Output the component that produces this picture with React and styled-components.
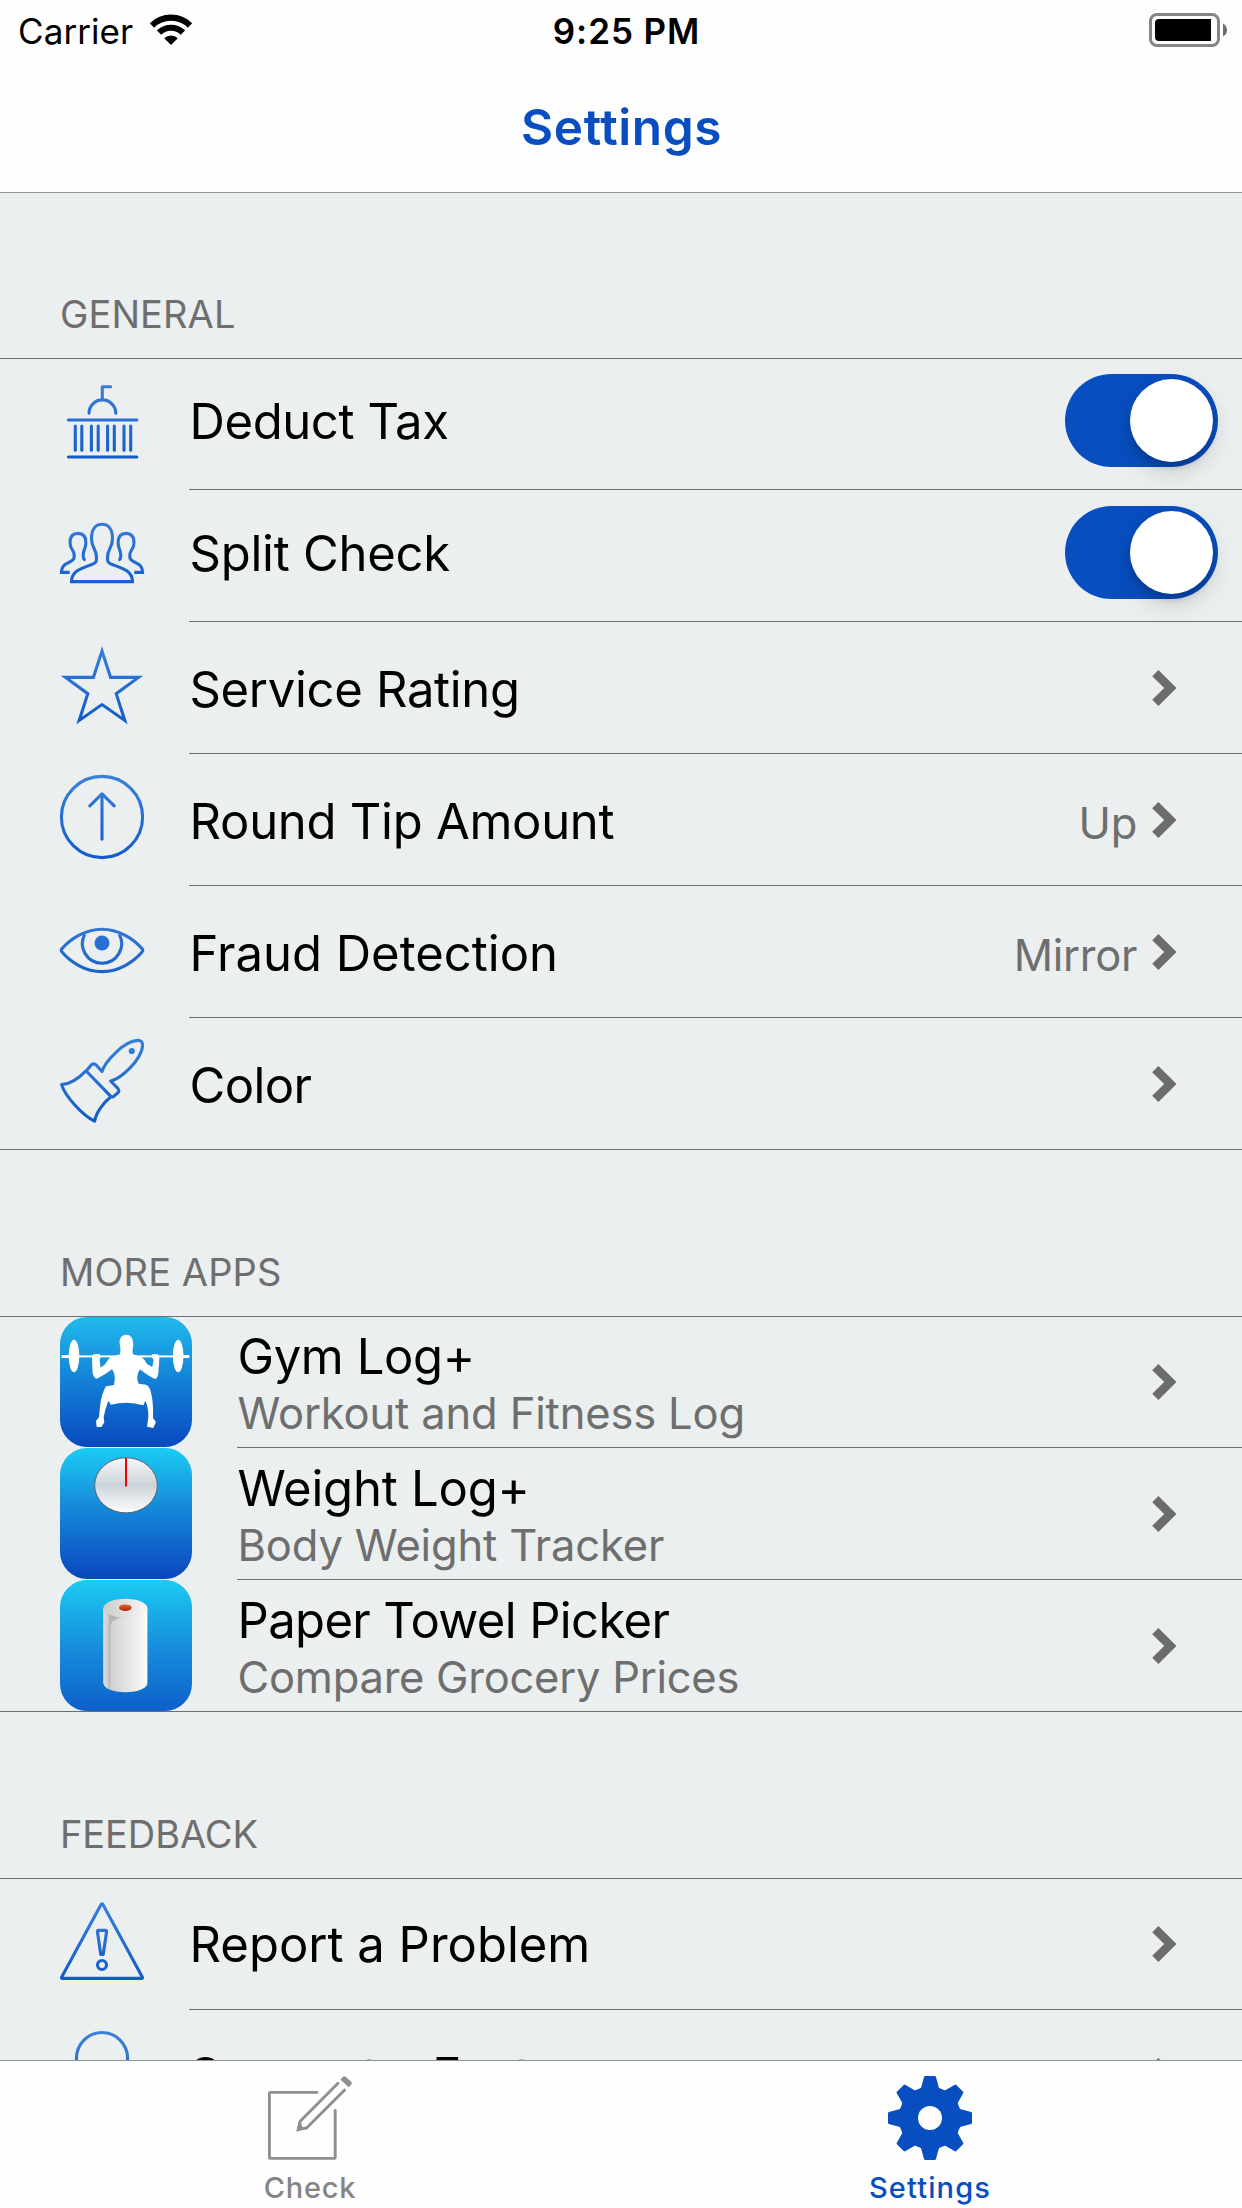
import React from "react";
import styled, { createGlobalStyle } from "styled-components";

const BLUE = "#084ec1";
const GRAY = "#6e6e6e";
const LINE = "#6c6f70";

const GlobalStyle = createGlobalStyle`
  *, *::before, *::after { box-sizing: border-box; }
  body { margin: 0; background: #ffffff; }
`;

const Screen = styled.div`
  display: flex;
  flex-direction: column;
  width: 1242px;
  height: 2208px;
  overflow: hidden;
  background: #ebeff0;
  font-family: Inter, Roboto, "Liberation Sans", sans-serif;
  color: #000;
`;

/* ---------- navigation header ---------- */

const Nav = styled.header`
  flex: none;
  height: 193px;
  background: #fefefe;
  border-bottom: 1px solid #929697;
`;

const StatusBar = styled.div`
  display: grid;
  grid-template-columns: 1fr auto 1fr;
  height: 60px;
  padding: 0 15px 0 18px;
  font-size: 35px;
  line-height: 62px;
`;

const Carrier = styled.div`
  display: flex;
  gap: 16px;
  letter-spacing: 0.08px;
`;

const WifiIcon = styled.svg`
  width: 44px;
  height: 32px;
  margin-top: 14px;
`;

const Clock = styled.div`
  padding-left: 8px;
  font-weight: 600;
  letter-spacing: 0.9px;
`;

const BatteryIcon = styled.svg`
  justify-self: end;
  width: 78px;
  height: 34px;
  margin-top: 13px;
`;

const Title = styled.h1`
  display: flex;
  align-items: center;
  justify-content: center;
  height: 132px;
  margin: 0;
  padding: 2px 0 0 1px;
  font-size: 49.5px;
  font-weight: 600;
  letter-spacing: 0.6px;
  color: ${BLUE};
`;

/* ---------- table ---------- */

const Content = styled.main`
  flex: 1;
  min-height: 0;
  overflow: hidden;
`;

const SectionHeader = styled.h2`
  display: flex;
  align-items: flex-end;
  height: ${(p) => (p.$first ? 166 : 167)}px;
  margin: 0;
  padding: 0 60px 21px;
  border-bottom: 1px solid ${LINE};
  font-size: 38px;
  font-weight: 400;
  line-height: 46px;
  letter-spacing: ${(p) => p.$track}px;
  color: ${GRAY};
`;

const Group = styled.div`
  margin-top: -1px;
`;

const Row = styled.div`
  display: flex;
  height: 132px;
  padding-left: 60px;

  &:last-child {
    border-bottom: 1px solid ${LINE};
  }
`;

const RowIcon = styled.svg`
  flex: none;
  width: 84px;
  height: 84px;
  margin: 21px 45px 0 0;
  overflow: visible;
  fill: none;
  stroke: url(#tint);
  stroke-width: 3.1;
`;

const AppIcon = styled.svg`
  flex: none;
  width: 132px;
  height: 131px;
  margin-right: 45px;
`;

const RowBody = styled.div`
  display: flex;
  flex: 1;
  height: 132px;
  padding-right: 65px;
  border-bottom: 1px solid ${LINE};

  ${Row}:last-child & {
    height: 131px;
    border-bottom: 0;
  }
`;

const Label = styled.div`
  flex: 1;
  padding: ${(p) => p.$top}px 0 0 0.5px;
  font-size: 49px;
  line-height: 59px;
  letter-spacing: ${(p) => p.$track}px;
  white-space: nowrap;
`;

const Value = styled.div`
  padding: 42px 15px 0 0;
  font-size: 43.5px;
  line-height: 54px;
  letter-spacing: -0.3px;
  color: ${GRAY};
`;

const AppText = styled.div`
  flex: 1;
  padding: 11px 0 0 0.5px;
  white-space: nowrap;
`;

const AppName = styled.div`
  font-size: 49px;
  line-height: 59px;
  letter-spacing: ${(p) => p.$track}px;
`;

const AppDetail = styled.div`
  font-size: 43.5px;
  line-height: 54px;
  letter-spacing: ${(p) => p.$track}px;
  color: ${GRAY};
`;

const ChevronIcon = styled.svg`
  flex: none;
  width: 25px;
  height: 36px;
  margin-top: 48px;
  fill: #6c6c6c;
`;

const Switch = styled.div`
  flex: none;
  display: flex;
  justify-content: flex-end;
  width: 153px;
  height: 93px;
  margin: 16px -41px 0 0;
  padding: 5px 5.5px 5px 5px;
  border-radius: 47px;
  background: ${BLUE};
`;

const Knob = styled.div`
  width: 83px;
  height: 83px;
  border-radius: 50%;
  background: #fff;
  box-shadow: 0 9px 24px rgba(0, 0, 0, 0.16), 0 6px 6px rgba(0, 0, 0, 0.13);
`;

/* ---------- tab bar ---------- */

const TabBar = styled.nav`
  flex: none;
  display: grid;
  grid-template-columns: 1fr 1fr;
  height: 148px;
  padding-right: 2px;
  background: #fefefe;
  border-top: 1px solid #8f9394;
`;

const Tab = styled.div`
  display: flex;
  flex-direction: column;
  align-items: center;
  gap: 7px;
  padding-top: 15px;
  font-size: 29px;
  font-weight: 500;
  line-height: 41px;
  letter-spacing: ${(p) => p.$track}px;
  color: ${(p) => (p.$active ? BLUE : "#858585")};
`;

const TabIcon = styled.svg`
  width: 84px;
  height: 84px;
  fill: none;
`;

/* ---------- drawings ---------- */

const Defs = styled.svg`
  position: absolute;
  width: 0;
  height: 0;
`;

const Gradients = () => (
  <Defs aria-hidden="true">
    <defs>
      <linearGradient id="tint" gradientUnits="userSpaceOnUse" x1="0" y1="0" x2="0" y2="84">
        <stop offset="0" stopColor="#3a80da" />
        <stop offset="1" stopColor="#115ac8" />
      </linearGradient>
      <linearGradient id="gymBg" x1="0" y1="0" x2="0" y2="1">
        <stop offset="0" stopColor="#20bbec" />
        <stop offset="0.5" stopColor="#147fd6" />
        <stop offset="1" stopColor="#0949be" />
      </linearGradient>
      <linearGradient id="weightBg" x1="0" y1="0" x2="0" y2="1">
        <stop offset="0" stopColor="#1bccf4" />
        <stop offset="0.45" stopColor="#1689d9" />
        <stop offset="1" stopColor="#0a46be" />
      </linearGradient>
      <linearGradient id="paperBg" x1="0" y1="0" x2="0" y2="1">
        <stop offset="0" stopColor="#1bcbf2" />
        <stop offset="0.5" stopColor="#178fdc" />
        <stop offset="1" stopColor="#0e5fca" />
      </linearGradient>
      <linearGradient id="dial" x1="0" y1="0" x2="0" y2="1">
        <stop offset="0" stopColor="#f6f7f8" />
        <stop offset="0.5" stopColor="#cbd3d9" />
        <stop offset="0.68" stopColor="#dfe4e8" />
        <stop offset="1" stopColor="#fbfbfc" />
      </linearGradient>
      <linearGradient id="roll" gradientUnits="userSpaceOnUse" x1="50" y1="0" x2="87" y2="0">
        <stop offset="0" stopColor="#cfcfcf" />
        <stop offset="0.3" stopColor="#dedede" />
        <stop offset="0.6" stopColor="#eaeaea" />
        <stop offset="1" stopColor="#fbfbfb" />
      </linearGradient>
      <linearGradient id="flap" gradientUnits="userSpaceOnUse" x1="43.4" y1="0" x2="50.2" y2="0">
        <stop offset="0" stopColor="#dedede" />
        <stop offset="0.6" stopColor="#cfcfcf" />
        <stop offset="1" stopColor="#b3b3b3" />
      </linearGradient>
      <linearGradient id="rollTop" x1="0" y1="0" x2="1" y2="0">
        <stop offset="0" stopColor="#cccccc" />
        <stop offset="1" stopColor="#f6f6f6" />
      </linearGradient>
      <linearGradient id="core" x1="0" y1="0" x2="0" y2="1">
        <stop offset="0" stopColor="#e9661f" />
        <stop offset="1" stopColor="#b31f10" />
      </linearGradient>
    </defs>
  </Defs>
);

const Wifi = () => (
  <WifiIcon viewBox="0 0 44 32">
    <g fill="none" stroke="#000" strokeWidth="6.2">
      <path d="M3 11.4A27.3 27.3 0 0 1 41 11.4" />
      <path d="M10 18.6A17.3 17.3 0 0 1 34 18.6" />
    </g>
    <path d="M22 31L15.2 24.2A9.6 9.6 0 0 1 28.8 24.2Z" />
  </WifiIcon>
);

const Battery = () => (
  <BatteryIcon viewBox="0 0 78 34">
    <rect x="1.5" y="1.5" width="68" height="31" rx="6.5" fill="none" stroke="#858585" strokeWidth="3" />
    <path d="M10 6H62V28H10A4 4 0 0 1 6 24V10A4 4 0 0 1 10 6Z" />
    <path d="M74 10.5Q78 12.5 78 17T74 23.5Z" fill="#6f6f6f" />
  </BatteryIcon>
);

const Chevron = () => (
  <ChevronIcon viewBox="0 0 25 36">
    <path d="M0.2 6.3L6.4 0L24.5 18L6.4 36L0.2 29.7L12.2 18Z" />
  </ChevronIcon>
);

const Capitol = () => (
  <RowIcon viewBox="0 0 84 84" strokeLinecap="round" strokeLinejoin="round">
    <path d="M50.6 7.8H42.3V20.6M29 34.3A13.4 13.4 0 0 1 55.8 34.3" />
    <path d="M8.4 41.01L76.8 41M8.4 78.01L76.8 78" />
    <path d="M15.3 47V71.2M21.8 47V71.2M31.4 47V71.2M38.2 47V71.2M47.6 47V71.2M54.3 47V71.2M64 47V71.2M70.7 47V71.2" />
  </RowIcon>
);

const People = () => (
  <RowIcon viewBox="0 0 84 84">
    <path d="M42 13.3C35.2 13.3 31.5 18.6 31.5 27.5C31.5 38 36.5 37 36.5 46.5C36.5 50.5 36.3 51.5 33.3 52.8C25 56.5 11.5 58.5 11.5 70.6H72.5C72.5 58.5 59 56.5 50.7 52.8C47.7 51.5 47.5 50.5 47.5 46.5C47.5 37 52.5 38 52.5 27.5C52.5 18.6 48.8 13.3 42 13.3Z" />
    <path d="M25.6 49C22.4 48.4 23.2 42.5 23.7 40.8C24.6 37.5 25.9 36 25.9 31.5C25.9 25.5 22.8 22.4 17.9 22.4C13 22.4 10 25.5 10 31.5C10 39 14.2 38.5 14.2 44C14.2 47.5 14 48.3 11 50.2C7 52.7 1.4 53.5 1.4 61.4H9.7" />
    <path d="M58.4 49C61.6 48.4 60.8 42.5 60.3 40.8C59.4 37.5 58.1 36 58.1 31.5C58.1 25.5 61.2 22.4 66.1 22.4C71 22.4 74 25.5 74 31.5C74 39 69.8 38.5 69.8 44C69.8 47.5 70 48.3 73 50.2C77 52.7 82.6 53.5 82.6 61.4H74.3" />
  </RowIcon>
);

const Star = () => (
  <RowIcon viewBox="0 0 84 84" strokeMiterlimit="10">
    <path d="M42 8L50.6 34.4H78.5L56.2 50.7L64.8 77.4L42 61.6L19.2 77.4L27.8 50.7L5.5 34.4H33.4Z" />
  </RowIcon>
);

const ArrowUp = () => (
  <RowIcon viewBox="0 0 84 84" strokeLinecap="round" strokeLinejoin="round">
    <circle cx="42" cy="42" r="40.6" />
    <path d="M29.8 30.8L42 18.8L54.2 30.8M42 19V64.2L42.01 64" />
  </RowIcon>
);

const Eye = () => (
  <RowIcon viewBox="0 0 84 84">
    <path d="M2 45C1 43.9 1 42.7 2 41.6C11 31.5 25.5 22.3 42 22.3S73 31.5 82 41.6C83 42.7 83 43.9 82 45C73.5 55 59 64.6 42 64.6S10.5 55 2 45Z" />
    <path d="M24.8 27.2A19.6 19.6 0 1 0 59.2 27.2" />
    <circle cx="42" cy="36" r="7.5" fill="url(#tint)" stroke="none" />
  </RowIcon>
);

const Brush = () => (
  <RowIcon viewBox="0 0 84 84" strokeLinejoin="round">
    <path d="M42 32.6C43.5 26 50 19 56.5 12.8C63 6.6 71 2 77.5 1.4C81 1.2 82.8 3.2 82.6 6.8C82 13.5 76.5 22.5 70.8 28.2C65 34.2 58 40.8 50.6 42L57.4 48.8C59.4 50.8 59.2 52.6 57.6 54L54 57.2Q52.4 58.4 50.8 57.4L26.2 32L31 26.3C32.6 24.4 34.6 24.4 36.2 26Z" />
    <path d="M26.2 31.6C19.5 38.5 10.5 45.3 1.6 45.6C5 57 22.5 76.5 34.6 82.2C36 73.5 43.5 63.5 51.4 57.2" />
    <circle cx="71.8" cy="12" r="3.1" fill="url(#tint)" stroke="none" />
  </RowIcon>
);

const Warning = () => (
  <RowIcon viewBox="0 0 84 84" strokeLinejoin="round">
    <path d="M41.2 5.2Q42 4.2 42.8 5.2L82.4 78.2Q82.8 79.4 81.6 79.4H2.4Q1.2 79.4 1.6 78.2Z" />
    <path d="M37.4 32.4Q37.4 31.4 38.4 31.4H45.6Q46.6 31.4 46.6 32.4L43.2 55.4H40.8Z" />
    <circle cx="42" cy="66" r="4.5" />
  </RowIcon>
);

const Bulb = () => (
  <RowIcon viewBox="0 0 84 84" strokeLinejoin="round">
    <path d="M32 66C32 52 16.4 46 16.4 27.5A25.6 26 0 0 1 67.6 27.5C67.6 46 52 52 52 66Z" />
  </RowIcon>
);

const GymApp = () => (
  <AppIcon viewBox="0 0 132 131">
    <rect y="1" width="132" height="130" rx="27" fill="url(#gymBg)" />
    <g fill="#fff">
      <rect x="1.6" y="39" width="17" height="3" />
      <rect x="113" y="39" width="16.4" height="3" />
      <rect x="14" y="39.4" width="104" height="2" />
      <ellipse cx="14" cy="40" rx="5.3" ry="16.2" />
      <ellipse cx="118.2" cy="40" rx="5.3" ry="16.2" />
      <g transform="translate(-60 -86) scale(.33333)">
        <path d="M379 314C365 314 357 326 359 340C360 350 361 356 364 362L397 362C399 354 401 346 399 336C398 322 390 314 379 314Z" />
        <path d="M362 355L360 373L332 381Q322 390 315 403L302 413L299 390Q304 376 298 372L280 373L276 384L278 430Q282 446 291 446Q316 434 336 418Q346 432 344 450L342 465L318 469Q304 492 300 530L297 562L288 572L290 591H304L313 577L311 562Q316 534 325 512L333 524Q384 512 430 526L436 512Q446 532 445 562L441 590L460 594L468 576L459 564Q461 516 452 484Q448 468 438 464L416 461Q406 440 420 418Q444 438 465 447Q474 444 475 430L478 384L474 373L456 373Q453 380 461 390L457 411L441 402Q434 388 424 381L399 373L396 355Z" />
      </g>
    </g>
  </AppIcon>
);

const WeightApp = () => (
  <AppIcon viewBox="0 0 132 131">
    <rect width="132" height="131" rx="27" fill="url(#weightBg)" />
    <ellipse cx="66" cy="37.3" rx="31.4" ry="27.6" fill="url(#dial)" stroke="#59636b" strokeWidth="1" />
    <path d="M65 10H67V38.6H65Z" fill="#fb0007" />
  </AppIcon>
);

const PaperApp = () => (
  <AppIcon viewBox="0 0 132 131">
    <rect width="132" height="131" rx="27" fill="url(#paperBg)" />
    <path d="M43.4 28V103C43.4 108.4 53 112.2 65.4 112.2S87.4 108.4 87.4 103V28Z" fill="url(#roll)" />
    <path d="M43.4 28V103Q44.5 107.6 50.2 109.8V48Q50.2 39 62 37.6V34Z" fill="url(#flap)" />
    <ellipse cx="65.4" cy="28.2" rx="22" ry="9.4" fill="url(#rollTop)" />
    <ellipse cx="65.3" cy="27.7" rx="6.3" ry="3.3" fill="url(#core)" />
  </AppIcon>
);

const CheckIcon = () => (
  <TabIcon viewBox="0 0 84 84">
    <g stroke="#8f8f8f" strokeWidth="2.9" strokeLinejoin="round">
      <path d="M49 16.4H2.6Q1.4 16.4 1.4 17.6V81.2Q1.4 82.4 2.6 82.4H66Q67.2 82.4 67.2 81.2V34.4" strokeLinecap="round" />
      <path d="M70.7 6.6L32.2 45.2L30.2 53.6L38.6 52L77.4 13.2" strokeLinejoin="miter" />
    </g>
    <path d="M30.6 46.5L28.6 55.2L37.8 53.2L34 50.6L33.4 47.4Z" fill="#8f8f8f" />
    <path d="M72.4 3.6L75 .8Q76.4-.4 78 .9L83 5.6Q84.4 7 83.2 8.6L80.6 11.2Z" fill="#8f8f8f" />
  </TabIcon>
);

const GearIcon = () => (
  <TabIcon viewBox="-42 -42 84 84">
    <g fill={BLUE}>
      {[0, 45, 90, 135, 180, 225, 270, 315].map((angle) => (
        <path key={angle} transform={`rotate(${angle})`} d="M-9 -30L-5.9 -41.2Q-5.6 -42 -4.8 -42H4.8Q5.6 -42 5.9 -41.2L9 -30L12 -26L0 -8L-12 -26Z" />
      ))}
      <path
        fillRule="evenodd"
        d="M-8.6 -30.2L8.6 -30.2L15 -27.6L27.6 -15L30.2 -8.6V8.6L27.6 15L15 27.6L8.6 30.2H-8.6L-15 27.6L-27.6 15L-30.2 8.6V-8.6L-27.6 -15L-15 -27.6Z"
      />
    </g>
    <circle r="12" fill="#fefefe" />
  </TabIcon>
);

/* ---------- page ---------- */

const general = [
  { icon: Capitol, label: "Deduct Tax", track: -0.4, top: 34, on: true },
  { icon: People, label: "Split Check", track: -0.26, top: 34, on: true },
  { icon: Star, label: "Service Rating", track: -0.32, top: 38 },
  { icon: ArrowUp, label: "Round Tip Amount", track: -0.28, top: 38, value: "Up" },
  { icon: Eye, label: "Fraud Detection", track: 0, top: 38, value: "Mirror" },
  { icon: Brush, label: "Color", track: -0.6, top: 38 },
];

const apps = [
  { icon: GymApp, name: "Gym Log+", track: -0.4, detail: "Workout and Fitness Log", detailTrack: -0.15 },
  { icon: WeightApp, name: "Weight Log+", track: -0.22, detail: "Body Weight Tracker", detailTrack: -0.14 },
  { icon: PaperApp, name: "Paper Towel Picker", track: -0.64, detail: "Compare Grocery Prices", detailTrack: -0.26 },
];

const feedback = [
  { icon: Warning, label: "Report a Problem", track: 0, top: 37 },
  { icon: Bulb, label: "Suggest a Feature", track: -0.33, top: 36 },
];

const SettingRow = ({ icon: Icon, label, track, top, value, on }) => (
  <Row>
    <Icon />
    <RowBody>
      <Label $top={top} $track={track}>{label}</Label>
      {value && <Value>{value}</Value>}
      {on ? <Switch><Knob /></Switch> : <Chevron />}
    </RowBody>
  </Row>
);

const AppRow = ({ icon: Icon, name, track, detail, detailTrack }) => (
  <Row>
    <Icon />
    <RowBody>
      <AppText>
        <AppName $track={track}>{name}</AppName>
        <AppDetail $track={detailTrack}>{detail}</AppDetail>
      </AppText>
      <Chevron />
    </RowBody>
  </Row>
);

export default function App() {
  return (
    <>
      <GlobalStyle />
      <Gradients />
      <Screen>
        <Nav>
          <StatusBar>
            <Carrier>Carrier<Wifi /></Carrier>
            <Clock>9:25 PM</Clock>
            <Battery />
          </StatusBar>
          <Title>Settings</Title>
        </Nav>
        <Content>
          <SectionHeader $first $track={0.1}>GENERAL</SectionHeader>
          <Group>{general.map((item) => <SettingRow key={item.label} {...item} />)}</Group>
          <SectionHeader $track={0.1}>MORE APPS</SectionHeader>
          <Group>{apps.map((item) => <AppRow key={item.name} {...item} />)}</Group>
          <SectionHeader $track={-0.1}>FEEDBACK</SectionHeader>
          <Group>{feedback.map((item) => <SettingRow key={item.label} {...item} />)}</Group>
        </Content>
        <TabBar>
          <Tab $track={0.8}><CheckIcon />Check</Tab>
          <Tab $active $track={1.13}><GearIcon />Settings</Tab>
        </TabBar>
      </Screen>
    </>
  );
}
